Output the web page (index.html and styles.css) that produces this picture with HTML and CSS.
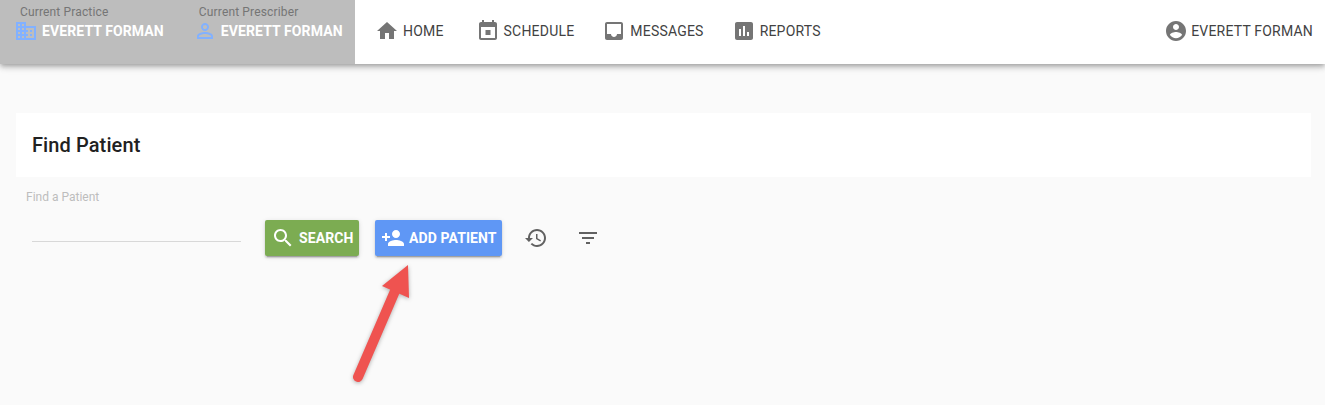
FILE: index.html
```html
<!DOCTYPE html>
<html lang="en">

<head>
  <meta charset="UTF-8">
  <title>Find Patient</title>
  <link rel="stylesheet" href="styles.css">
</head>

<body>
  <header class="topbar">
    <div class="current">
      <div class="current-item current-practice">
        <span class="current-label">Current Practice</span>
        <span class="current-value">
          <svg class="icon" viewBox="0 0 24 24"><path d="M12 7V3H2v18h20V7H12zM6 19H4v-2h2v2zm0-4H4v-2h2v2zm0-4H4V9h2v2zm0-4H4V5h2v2zm4 12H8v-2h2v2zm0-4H8v-2h2v2zm0-4H8V9h2v2zm0-4H8V5h2v2zm10 12h-8v-2h2v-2h-2v-2h2v-2h-2V9h8v10zm-2-8h-2v2h2v-2zm0 4h-2v2h2v-2z"/></svg>
          EVERETT FORMAN
        </span>
      </div>
      <div class="current-item current-prescriber">
        <span class="current-label">Current Prescriber</span>
        <span class="current-value">
          <svg class="icon" viewBox="0 0 24 24"><path d="M12 5.9c1.16 0 2.1.94 2.1 2.1s-.94 2.1-2.1 2.1S9.9 9.16 9.9 8s.94-2.1 2.1-2.1m0 9c2.97 0 6.1 1.46 6.1 2.1v1.1H5.9V17c0-.64 3.13-2.1 6.1-2.1M12 4C9.79 4 8 5.79 8 8s1.79 4 4 4 4-1.79 4-4-1.79-4-4-4zm0 9c-2.67 0-8 1.34-8 4v3h16v-3c0-2.66-5.33-4-8-4z"/></svg>
          EVERETT FORMAN
        </span>
      </div>
    </div>

    <nav class="nav">
      <a class="nav-link nav-home">
        <svg class="icon" viewBox="0 0 24 24"><path d="M10 20v-6h4v6h5v-8h3L12 3 2 12h3v8z"/></svg>
        HOME
      </a>
      <a class="nav-link">
        <svg class="icon" viewBox="0 0 24 24"><path d="M14.5 11h-5v5h5v-5zM16 1v2H8V1H6v2H5c-1.11 0-1.99.9-1.99 2L3 19c0 1.1.89 2 2 2h14c1.1 0 2-.9 2-2V5c0-1.1-.9-2-2-2h-1V1h-2zm3 18H5V8h14v11z"/></svg>
        SCHEDULE
      </a>
      <a class="nav-link">
        <svg class="icon" viewBox="0 0 24 24"><path d="M19 3H4.99c-1.11 0-1.98.89-1.98 2L3 19c0 1.1.88 2 1.99 2H19c1.1 0 2-.9 2-2V5c0-1.11-.9-2-2-2zm0 12h-4c0 1.66-1.35 3-3 3s-3-1.34-3-3H4.99V5H19v10z"/></svg>
        MESSAGES
      </a>
      <a class="nav-link">
        <svg class="icon" viewBox="0 0 24 24"><path d="M19 3H5c-1.1 0-2 .9-2 2v14c0 1.1.9 2 2 2h14c1.1 0 2-.9 2-2V5c0-1.1-.9-2-2-2zM9 17H7v-7h2v7zm4 0h-2V7h2v10zm4 0h-2v-4h2v4z"/></svg>
        REPORTS
      </a>
    </nav>

    <a class="nav-link user-link">
      <svg class="icon" viewBox="0 0 24 24"><path d="M12 2C6.48 2 2 6.48 2 12s4.48 10 10 10 10-4.48 10-10S17.52 2 12 2zm0 3c1.66 0 3 1.34 3 3s-1.34 3-3 3-3-1.34-3-3 1.34-3 3-3zm0 14.2c-2.5 0-4.71-1.28-6-3.22.03-1.99 4-3.08 6-3.08 1.99 0 5.97 1.09 6 3.08-1.29 1.94-3.5 3.22-6 3.22z"/></svg>
      EVERETT FORMAN
    </a>
  </header>

  <main class="content">
    <div class="title-card">
      <h1>Find Patient</h1>
    </div>

    <div class="search-row">
      <div class="field">
        <label class="field-label" for="patient">Find a Patient</label>
        <input class="field-input" id="patient" type="text">
      </div>

      <button class="btn btn-search" type="button">
        <svg class="icon" viewBox="0 0 24 24"><path d="M15.5 14h-.79l-.28-.27C15.41 12.59 16 11.11 16 9.5 16 5.91 13.09 3 9.5 3S3 5.91 3 9.5 5.91 16 9.5 16c1.61 0 3.09-.59 4.23-1.57l.27.28v.79l5 4.99L20.49 19l-4.99-5zm-6 0C7.01 14 5 11.99 5 9.5S7.01 5 9.5 5 14 7.01 14 9.5 11.99 14 9.5 14z"/></svg>
        SEARCH
      </button>
      <button class="btn btn-add" type="button">
        <svg class="icon" viewBox="0 0 24 24"><path d="M15 12c2.21 0 4-1.79 4-4s-1.79-4-4-4-4 1.79-4 4 1.79 4 4 4zm-9-2V7H4v3H1v2h3v3h2v-3h3v-2H6zm9 4c-2.67 0-8 1.34-8 4v2h16v-2c0-2.66-5.33-4-8-4z"/></svg>
        ADD PATIENT
      </button>
      <button class="icon-btn" type="button">
        <svg class="icon" viewBox="0 0 24 24"><path d="M13 3c-4.97 0-9 4.03-9 9H1l3.89 3.89.07.14L9 12H6c0-3.87 3.13-7 7-7s7 3.13 7 7-3.13 7-7 7c-1.93 0-3.68-.79-4.94-2.06l-1.42 1.42C8.27 19.99 10.51 21 13 21c4.97 0 9-4.03 9-9s-4.03-9-9-9zm-1 5v5l4.28 2.54.72-1.21-3.5-2.08V8H12z"/></svg>
      </button>
      <button class="icon-btn" type="button">
        <svg class="icon" viewBox="0 0 24 24"><path d="M10 18h4v-2h-4v2zM3 6v2h18V6H3zm3 7h12v-2H6v2z"/></svg>
      </button>
    </div>

    <!-- annotation arrow -->
    <svg class="arrow" width="70" height="125" viewBox="0 0 70 125">
      <path d="M7 112 L44 26" stroke="#ef5350" stroke-width="10" stroke-linecap="round" fill="none"/>
      <path d="M57 0 L31 21 L58 33 z" fill="#ef5350"/>
    </svg>
  </main>
</body>

</html>
```

FILE: styles.css
```css
html,
body {
  margin: 0;
  padding: 0;
}

body {
  height: 405px;
  overflow: hidden;
  background: #fafafa;
  font-family: Roboto, "Liberation Sans", sans-serif;
  color: #212121;
}

.icon {
  width: 24px;
  height: 24px;
  flex: none;
  fill: currentColor;
}

/* 상단 바 */
.topbar {
  height: 64px;
  display: flex;
  align-items: stretch;
  background: #fff;
  box-shadow: 0 2px 4px -1px rgba(0, 0, 0, 0.2), 0 4px 5px 0 rgba(0, 0, 0, 0.14), 0 1px 10px 0 rgba(0, 0, 0, 0.12);
}

.current {
  width: 355px;
  display: flex;
  background: #bdbdbd;
  box-sizing: border-box;
  padding-left: 14px;
}

.current-item {
  display: flex;
  flex-direction: column;
}

.current-prescriber {
  margin-left: 29px;
}

.current-label {
  margin: 5px 0 0 6px;
  font-size: 12px;
  line-height: 14px;
  letter-spacing: 0.15px;
  color: #757575;
}

.current-value {
  display: flex;
  align-items: center;
  gap: 4px;
  font-size: 14px;
  font-weight: 700;
  line-height: 24px;
  letter-spacing: 0.1px;
  color: #fff;
}

.current-value .icon {
  color: #82b1ff;
}

.nav {
  display: flex;
  margin-left: 20px;
  gap: 28px;
}

.nav-link {
  display: flex;
  align-items: center;
  gap: 4px;
  height: 62px;
  font-size: 14px;
  font-weight: 400;
  letter-spacing: 0.2px;
  color: #424242;
}

.nav-link .icon {
  color: #757575;
}

.nav-home {
  margin-right: 4px;
}

.user-link {
  margin-left: auto;
  margin-right: 12px;
  gap: 3px;
}

/* 본문 */
.content {
  position: relative;
  padding: 49px 14px 0 16px;
}

.title-card {
  height: 64px;
  display: flex;
  align-items: center;
  padding-left: 16px;
  background: #fff;
}

.title-card h1 {
  margin: 0;
  font-size: 20px;
  font-weight: 500;
  letter-spacing: 0.1px;
  color: #212121;
}

.search-row {
  display: flex;
  align-items: flex-start;
  margin-top: 13px;
}

.field {
  width: 209px;
  margin-left: 16px;
  position: relative;
  height: 51px;
  border-bottom: 1px solid #d8d8d8;
}

.field-label {
  position: absolute;
  top: 0;
  left: -6px;
  font-size: 12px;
  line-height: 14px;
  color: #bdbdbd;
}

.field-input {
  width: 100%;
  height: 24px;
  margin-top: 26px;
  border: none;
  padding: 0;
  background: transparent;
  outline: none;
}

.btn {
  height: 36px;
  margin-top: 30px;
  display: flex;
  align-items: center;
  gap: 4px;
  border: none;
  border-radius: 2px;
  padding: 0 0 0 6px;
  color: #fff;
  font-family: inherit;
  font-size: 14px;
  font-weight: 700;
  letter-spacing: 0.1px;
  box-shadow: 0 3px 1px -2px rgba(0, 0, 0, 0.2), 0 2px 2px 0 rgba(0, 0, 0, 0.14), 0 1px 5px 0 rgba(0, 0, 0, 0.12);
}

.btn-search {
  width: 94px;
  margin-left: 24px;
  background: #7cac52;
}

.btn-add {
  width: 127px;
  margin-left: 16px;
  background: #5f97f5;
}

.icon-btn {
  width: 36px;
  height: 36px;
  margin-top: 30px;
  margin-left: 16px;
  padding: 6px;
  border: none;
  background: none;
  color: #616161;
}

.arrow {
  position: absolute;
  left: 351px;
  top: 201px;
  filter: drop-shadow(0 1px 2px rgba(0, 0, 0, 0.3));
}
```
